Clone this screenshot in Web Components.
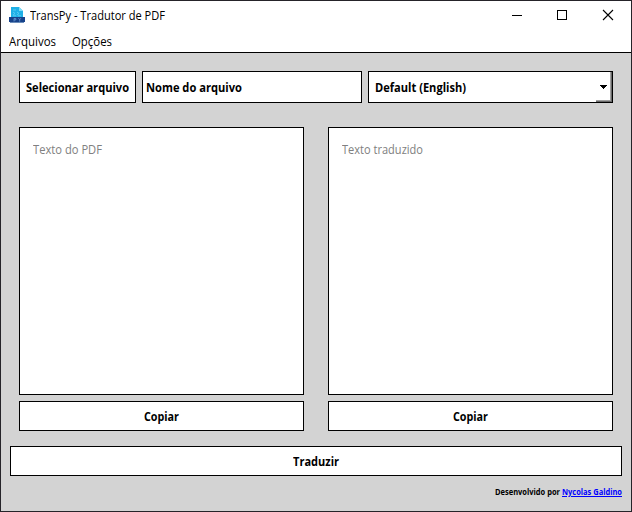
<!DOCTYPE html>
<html lang="pt-BR">
<head>
<meta charset="utf-8">
<title>TransPy - Tradutor de PDF</title>
<style>
html,body{margin:0;height:100%;overflow:hidden}
body{font:12px/16px "Open Sans","Noto Sans",sans-serif;color:#000}
</style>
</head>
<body>
<trans-app></trans-app>
<script>
const define = (name, html, ready) => customElements.define(name, class extends HTMLElement {
  connectedCallback() {
    if (this.shadowRoot) return;
    this.attachShadow({mode: 'open'}).innerHTML = html;
    if (ready) ready(this, this.shadowRoot);
  }
});

// A single line of text condensed to the width given in its "w" attribute.
define('fit-label', `<style>
:host{display:block;white-space:nowrap;height:16px;flex:none}
span{display:inline-block;transform-origin:0 0}
</style><span><slot></slot></span>`, (el, root) => {
  const w = +el.getAttribute('w'), s = root.querySelector('span');
  el.style.width = w + 'px';
  s.style.transform = `scaleX(${w / s.getBoundingClientRect().width})`;
});

define('app-icon', `<style>:host{display:block;width:16px;height:16px}svg{display:block}</style>
<svg width="16" height="16" viewBox="0 0 16 16">
<path d="M2 0h8l4 4v7H2z" fill="#1fb0e6"/><path d="M10 0v4h4z" fill="#7cdcf8"/>
<path d="M4 3h3M4 5l2 1.500-2 1.500M8 5l2 1.500-2 1.500M4 8.800h3M9 8.800h3" stroke="#67d2f6" stroke-width=".8" fill="none"/>
<path d="M0 10h16v5H0z" fill="#17428a"/><path d="M1 15h14v.7H1z" fill="#2a5c9c"/>
<path d="M5 14.500v-3h1.800v1.500H5M9.500 11.200l1.200 1.500 1.200-1.500M10.700 12.700v2" stroke="#6a9bd2" fill="none" stroke-width=".8"/>
</svg>`);

define('title-bar', `<style>
:host{display:flex;height:30px;align-items:center;padding-left:8px;box-sizing:border-box}
app-icon{margin-bottom:2px}
fit-label{margin-left:5px}
nav{margin-left:auto;display:flex}
svg{display:block}
</style><app-icon></app-icon><fit-label w="135"><slot></slot></fit-label>
<nav><svg width="138" height="30" viewBox="0 0 138 30" shape-rendering="crispEdges" fill="none" stroke="#000">
<path d="M19 14.500h10"/><rect x="64.500" y="9.500" width="9" height="9"/>
<path d="M110 9l10 10M120 9l-10 10" shape-rendering="auto" stroke-width="1.100"/></svg></nav>`);

define('menu-bar', `<style>
:host{display:flex;height:18px;border-bottom:1px solid #000;padding:3px 8px 0;gap:16px;align-items:flex-start}
</style><slot></slot>`);

define('flat-button', `<style>
:host{display:flex;box-sizing:border-box;height:30px;background:#fff;border:1px solid #000;padding-top:2px;align-items:center;justify-content:center;font-weight:700}
:host([field]){justify-content:flex-start;padding-left:3px}
</style><slot></slot>`);

define('language-select', `<style>
:host{display:flex;box-sizing:border-box;background:#fff;border:1px solid #000;align-items:stretch;justify-content:space-between;padding-left:6px;font-weight:700}
fit-label{align-self:center;padding-top:2px}
i{box-sizing:border-box;width:16px;border:solid #696969;border-width:0 1px 1px 0;box-shadow:inset -1px -1px #a0a0a0;display:flex;justify-content:center;align-items:center}
svg{display:block}
</style><fit-label w="91"><slot></slot></fit-label>
<i><svg width="7" height="4" shape-rendering="crispEdges"><path d="M0 0h7v1H6v1H5v1H4v1H3V3H2V2H1V1H0z"/></svg></i>`);

define('text-panel', `<style>
:host{display:grid;grid-template-rows:268px 30px;gap:6px}
section{background:#fff;border:1px solid #000;padding:14px 13px;color:#808080;box-sizing:border-box}
</style><section><slot></slot></section><flat-button><fit-label w="35">Copiar</fit-label></flat-button>`);

define('app-footer', `<style>
:host{display:flex;justify-content:flex-end;gap:2px;font-size:8px;font-weight:700;padding-top:8px}
a{color:#00f;text-decoration:underline}
</style><fit-label w="65">Desenvolvido por</fit-label><fit-label w="60"><a href="#">Nycolas Galdino</a></fit-label>`);

define('trans-app', `<style>
:host{display:flex;flex-direction:column;box-sizing:border-box;width:632px;height:512px;border:1px solid #252329;background:#fff}
main{flex:1;background:#d3d3d3;padding:18px 9px 0}
.tools{display:grid;grid-template-columns:117px 220px 245px;grid-template-rows:32px;gap:6px;margin:0 9px}
.tools>*{height:auto}
.panels{display:grid;grid-template-columns:285px 285px;gap:24px;margin:24px 9px 15px}
</style>
<title-bar>TransPy - Tradutor de PDF</title-bar>
<menu-bar><fit-label w="47">Arquivos</fit-label><fit-label w="40">Opções</fit-label></menu-bar>
<main>
<div class="tools"><flat-button><fit-label w="103">Selecionar arquivo</fit-label></flat-button>
<flat-button field><fit-label w="96">Nome do arquivo</fit-label></flat-button>
<language-select>Default (English)</language-select></div>
<div class="panels"><text-panel><fit-label w="69">Texto do PDF</fit-label></text-panel>
<text-panel><fit-label w="81">Texto traduzido</fit-label></text-panel></div>
<flat-button><fit-label w="46">Traduzir</fit-label></flat-button>
<app-footer></app-footer>
</main>`);
</script>
</body>
</html>
